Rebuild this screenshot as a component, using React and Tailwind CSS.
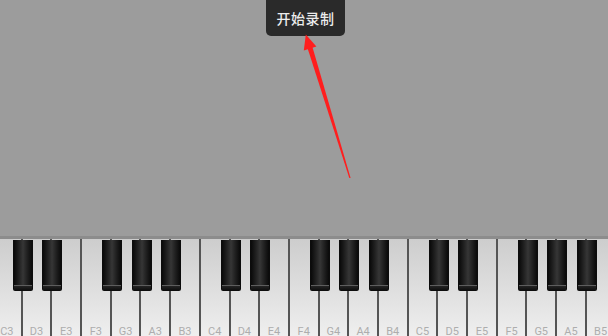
import React from "react";

const whites = ["C3","D3","E3","F3","G3","A3","B3","C4","D4","E4","F4","G4","A4","B4","C5","D5","E5","F5","G5","A5","B5"];
const KW = 29.7;
const OFF = -7;
const blackAfter = [];
for (let o = 0; o < 3; o++) {
  [0, 1, 3, 4, 5].forEach((i) => blackAfter.push(o * 7 + i));
}

export default function App() {
  return (
    <div className="w-[608px] h-[336px] overflow-hidden flex flex-col bg-[#9c9c9c] relative" style={{ fontFamily: '"Noto Sans CJK SC", "Liberation Sans", sans-serif' }}>
      <div className="h-[236px] shrink-0 bg-[#9c9c9c]" />
      <div className="h-[3px] shrink-0 bg-[#8c8c8c]" />
      <div className="flex-1 relative overflow-hidden">
        <div className="flex h-full ml-[-7px]">
          {whites.map((n) => (
            <div key={n} className="w-[29.7px] shrink-0 h-full border-r-2 border-[#555555] bg-gradient-to-b from-[#cdcdcd] to-[#efefef] flex items-end justify-center">
              <span className="text-[11px] leading-none text-[#adadad] mb-[-1px]" style={{ fontFamily: 'Roboto, "Liberation Sans", sans-serif' }}>{n}</span>
            </div>
          ))}
        </div>
        {blackAfter.map((i) => (
          <div
            key={i}
            className="absolute top-[1px] w-[20px] h-[51px] rounded-b-[2px] bg-[#0c0c0c] flex flex-col items-stretch px-[1px] pb-[1px]"
            style={{ left: OFF + (i + 1) * KW - 10 }}
          >
            <div className="flex-1 bg-gradient-to-r from-[#0a0a0a] via-[#363636] to-[#0a0a0a]" />
            <div className="h-[1px] bg-[#5e5e5e]" />
            <div className="h-[4px] bg-gradient-to-b from-[#242424] to-[#111]" />
          </div>
        ))}
      </div>

      <div className="absolute left-[266px] top-[-5px] w-[79px] h-[41px] rounded-[5px] bg-[#2a2a2a] flex items-end justify-center pb-[11px]">
        <span className="text-[14px] leading-none text-[#ececec] font-medium tracking-[0.5px]">开始录制</span>
      </div>

      <svg className="absolute left-0 top-0" width="608" height="336" viewBox="0 0 608 336">
        <polygon points="349.3,178 350.6,178 312.2,46.3 307.4,47.8" fill="#ff1e1e" />
        <polygon points="305.8,34.5 303.8,50.6 316.4,46.6" fill="#ff1e1e" />
      </svg>
    </div>
  );
}
